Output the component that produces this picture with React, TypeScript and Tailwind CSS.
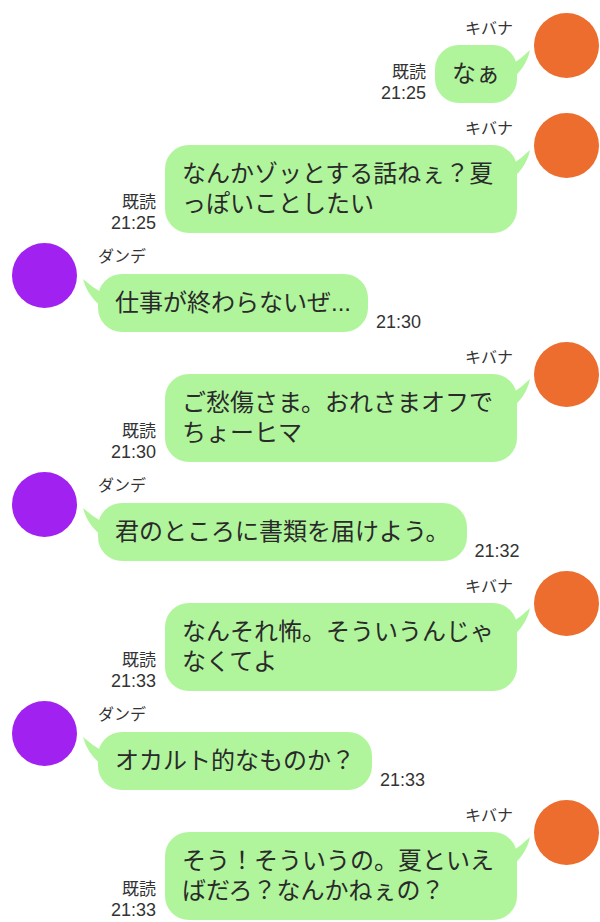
import React from "react"

type Msg = {
    from: "kibana" | "dande",
    lines: string[],
    time: string
}

const messages: Msg[] = [
    { from: "kibana", lines: ["なぁ"], time: "21:25" },
    { from: "kibana", lines: ["なんかゾッとする話ねぇ？夏", "っぽいことしたい"], time: "21:25" },
    { from: "dande", lines: ["仕事が終わらないぜ..."], time: "21:30" },
    { from: "kibana", lines: ["ご愁傷さま。おれさまオフで", "ちょーヒマ"], time: "21:30" },
    { from: "dande", lines: ["君のところに書類を届けよう。"], time: "21:32" },
    { from: "kibana", lines: ["なんそれ怖。そういうんじゃ", "なくてよ"], time: "21:33" },
    { from: "dande", lines: ["オカルト的なものか？"], time: "21:33" },
    { from: "kibana", lines: ["そう！そういうの。夏といえ", "ばだろ？なんかねぇの？"], time: "21:33" },
]

const Bubble = ({ lines, side }: { lines: string[], side: "left" | "right" }) => {
    return (
        <div
            className={
                "relative bg-[#b0f59c] rounded-[24px] px-[17px] py-[14px] text-[24px] leading-[30px] text-[#2a2a2a] whitespace-nowrap " +
                (lines.length > 1 ? "w-[352px]" : "")
            }
        >
            {side == "right" ? (
                <svg className="absolute top-0 -right-[16px] w-[28px] h-[40px]" viewBox="0 0 28 40">
                    <path d="M6 20 Q16 14 25 5 Q21 24 4 36 Z" fill="#b0f59c" />
                </svg>
            ) : (
                <svg className="absolute top-0 -left-[16px] w-[28px] h-[40px]" viewBox="0 0 28 40">
                    <path d="M22 20 Q11 14 1 5 Q6 24 24 36 Z" fill="#b0f59c" />
                </svg>
            )}
            {lines.map((line, idx) => (
                <div key={idx} className="relative">{line}</div>
            ))}
        </div>
    )
}

const KibanaRow = ({ msg }: { msg: Msg }) => {
    return (
        <div className="flex justify-end items-start pr-[1px]">
            <div className="flex flex-col items-end">
                <div className="h-8 flex items-center pr-1 text-[16px] text-[#333]">
                    キバナ
                </div>
                <div className="flex items-end">
                    <div className="mr-[9px] flex flex-col items-end text-[18px] leading-5 text-[#333]">
                        <span className="text-[17px]">既読</span>
                        <span>{msg.time}</span>
                    </div>
                    <Bubble lines={msg.lines} side="right" />
                </div>
            </div>
            <div className="ml-[17px] w-[65px] h-[65px] rounded-full bg-[#ec6d2e] shrink-0" />
        </div>
    )
}

const DandeRow = ({ msg }: { msg: Msg }) => {
    return (
        <div className="flex items-start pl-3">
            <div className="mr-[21px] w-[65px] h-[65px] rounded-full bg-[#a121f1] shrink-0" />
            <div className="flex flex-col items-start">
                <div className="h-[31px] flex items-center pb-1 text-[16px] text-[#333]">
                    ダンデ
                </div>
                <div className="flex items-end">
                    <Bubble lines={msg.lines} side="left" />
                    <div className="ml-2 text-[18px] leading-5 text-[#333]">
                        {msg.time}
                    </div>
                </div>
            </div>
        </div>
    )
}

const App = () => {
    return (
        <div className="w-[600px] h-[922px] overflow-hidden bg-white pt-[13px] flex flex-col gap-[10px] font-[family-name:'Liberation_Sans','Noto_Sans_CJK_JP',sans-serif]">
            {
                messages.map((msg, idx) => (
                    msg.from == "kibana"
                        ? <KibanaRow key={idx} msg={msg} />
                        : <DandeRow key={idx} msg={msg} />
                ))
            }
        </div>
    )
}

export default App
